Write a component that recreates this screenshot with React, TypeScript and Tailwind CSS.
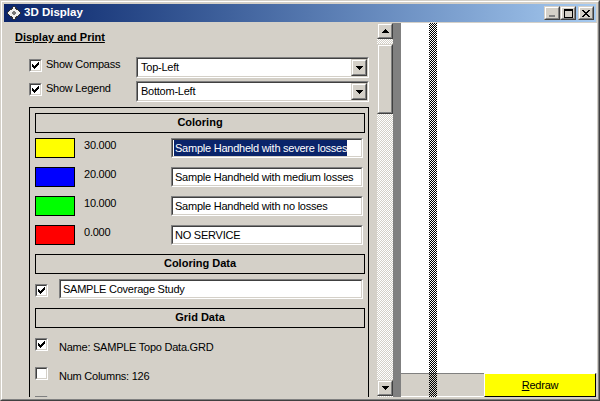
import React from "react";

const FONT = "font-['Liberation_Sans',Arial,sans-serif]";

function Check() {
  return (
    <svg width="9" height="9" viewBox="0 0 9 9" shapeRendering="crispEdges" className="block">
      <path d="M1 3h1v3h-1zM2 4h1v3h-1zM3 5h1v3h-1zM4 4h1v3h-1zM5 3h1v3h-1zM6 2h1v3h-1zM7 1h1v3h-1z" fill="#000" />
    </svg>
  );
}

function CheckBox({ checked }: { checked?: boolean }) {
  return (
    <div className="w-[13px] h-[13px] shrink-0 border border-t-[#808080] border-l-[#808080] border-r-white border-b-white">
      <div className="w-full h-full bg-white border border-t-[#404040] border-l-[#404040] border-r-[#d4d0c8] border-b-[#d4d0c8] flex items-center justify-center">
        {checked && <Check />}
      </div>
    </div>
  );
}

function Sunken({ className, children }: { className: string; children: React.ReactNode }) {
  return (
    <div className={`shrink-0 border border-t-[#808080] border-l-[#808080] border-r-white border-b-white ${className}`}>
      <div className="w-full h-full bg-white border border-t-[#404040] border-l-[#404040] border-r-[#d4d0c8] border-b-[#d4d0c8] flex items-center overflow-hidden whitespace-nowrap">
        {children}
      </div>
    </div>
  );
}

function Raised({ className, children }: { className: string; children?: React.ReactNode }) {
  return (
    <div className={`border border-t-[#d4d0c8] border-l-[#d4d0c8] border-r-[#404040] border-b-[#404040] ${className}`}>
      <div className="w-full h-full bg-[#d4d0c8] border border-t-white border-l-white border-r-[#808080] border-b-[#808080] flex items-center justify-center">
        {children}
      </div>
    </div>
  );
}

function Tri({ up }: { up?: boolean }) {
  return (
    <svg width="7" height="4" viewBox="0 0 7 4" shapeRendering="crispEdges" className="block">
      <path d={up ? "M3 0h1v1h-1zM2 1h3v1h-3zM1 2h5v1h-5zM0 3h7v1h-7z" : "M0 0h7v1h-7zM1 1h5v1h-5zM2 2h3v1h-3zM3 3h1v1h-1z"} fill="#000" />
    </svg>
  );
}

function Combo({ text }: { text: string }) {
  return (
    <Sunken className="w-[233px] h-[21px]">
      <span className="pl-[3px] flex-1">{text}</span>
      <Raised className="w-[16px] h-[17px] shrink-0">
        <Tri />
      </Raised>
    </Sunken>
  );
}

function Header({ text, className = "" }: { text: string; className?: string }) {
  return (
    <div className={`w-[330px] h-[20px] border border-black pb-px flex items-center justify-center font-bold text-[11px] tracking-normal ${className}`}>
      {text}
    </div>
  );
}

function ColorRow({ color, value, text, selected }: { color: string; value: string; text: string; selected?: boolean }) {
  return (
    <div className="flex items-start h-[20px]">
      <div className={`w-[40px] h-[20px] border border-black shrink-0 ${color}`} />
      <div className="w-[96px] pl-[9px] mt-px leading-[13px]">{value}</div>
      <Sunken className="w-[192px] h-[20px]">
        <span className={`ml-px pl-px ${selected ? "bg-[#0a246a] text-white" : ""}`}>{text}</span>
      </Sunken>
    </div>
  );
}

const CHECKER =
  "bg-[image:repeating-conic-gradient(#000_0_25%,transparent_0_50%)] bg-[length:2px_2px]";
const TRACK =
  "bg-[image:repeating-conic-gradient(#d4d0c8_0_25%,#ffffff_0_50%)] bg-[length:2px_2px]";

export default function App() {
  return (
    <div className={`${FONT} w-[600px] h-[401px] overflow-hidden text-[11px] tracking-[-0.24px] text-black bg-[#d4d0c8] border border-t-[#d4d0c8] border-l-[#d4d0c8] border-r-[#404040] border-b-[#404040]`}>
      <div className="w-full h-full flex flex-col p-[2px] border border-t-white border-l-white border-r-[#808080] border-b-[#808080]">
        {/* Title bar */}
        <div className="h-[18px] shrink-0 flex items-center bg-gradient-to-r from-[#0a246a] to-[#a6caf0]">
          <svg width="14" height="14" viewBox="0 0 14 14" className="ml-[3px] block" shapeRendering="crispEdges">
            <path d="M6 0h2v1h1v1h1v1h1v1h1v1h1v1h1v2h-1v1h-1v1h-1v1h-1v1h-1v1h-1v1h-2v-1h-1v-1h-1v-1h-1v-1h-1v-1h-1v-1h-1v-2h1v-1h1v-1h1v-1h1v-1h1v-1h1z" fill="#333" />
            <path d="M6 1h2v2h1v1h2v1h1v1h1v2h-1v1h-1v1h-2v1h-1v2h-2v-2h-1v-1h-2v-1h-1v-1h-1v-2h1v-1h1v-1h2v-1h1z" fill="#f0f0f0" />
            <path d="M6 5h2v1h1v2h-1v1h-2v-1h-1v-2h1z" fill="#777" />
          </svg>
          <span className="ml-[3px] text-white font-bold text-[11.5px] tracking-normal leading-none">3D Display</span>
          <div className="ml-auto flex items-center mr-[2px]">
            <Raised className="w-[16px] h-[14px]">
              <svg width="6" height="2" viewBox="0 0 6 2" className="block mt-[6px] mr-[1px]"><rect width="6" height="2" fill="#808080" /></svg>
            </Raised>
            <Raised className="w-[16px] h-[14px]">
              <svg width="9" height="9" viewBox="0 0 9 9" className="block" shapeRendering="crispEdges"><path d="M0 0h9v2h-9zM0 2h1v7h-1zM8 2h1v7h-1zM1 8h7v1h-7z" fill="#000" /></svg>
            </Raised>
            <Raised className="w-[16px] h-[14px] ml-[2px]">
              <svg width="8" height="7" viewBox="0 0 8 7" className="block" shapeRendering="crispEdges"><path d="M0 0h2v1h-2zM6 0h2v1h-2zM1 1h2v1h-2zM5 1h2v1h-2zM2 2h4v1h-4zM3 3h2v1h-2zM2 4h4v1h-4zM1 5h2v1h-2zM5 5h2v1h-2zM0 6h2v1h-2zM6 6h2v1h-2z" fill="#000" /></svg>
            </Raised>
          </div>
        </div>

        {/* Body */}
        <div className="mt-px flex-1 min-h-0 flex">
          {/* Form */}
          <div className="w-[373px] shrink-0 overflow-hidden pl-[25px] pt-[7px]">
            <div className="-ml-[14px] font-bold tracking-normal leading-[14px] underline">Display and Print</div>

            <div className="mt-[13px] flex items-start h-[21px]">
              <div className="mt-[2px]"><CheckBox checked /></div>
              <div className="w-[94px] pl-[4px] leading-[13px] mt-[1px]">Show Compass</div>
              <Combo text="Top-Left" />
            </div>
            <div className="mt-[3px] flex items-start h-[21px]">
              <div className="mt-[2px]"><CheckBox checked /></div>
              <div className="w-[94px] pl-[4px] leading-[13px] mt-[1px]">Show Legend</div>
              <Combo text="Bottom-Left" />
            </div>

            <div className="mt-[5px] w-[340px] h-[320px] border border-black border-b-0 pl-[5px] pt-[5px]">
              <Header text="Coloring" />
              <div className="mt-[5px] flex flex-col gap-[9px]">
                <ColorRow color="bg-[#ffff00]" value="30.000" text="Sample Handheld with severe losses" selected />
                <ColorRow color="bg-[#0000ff]" value="20.000" text="Sample Handheld with medium losses" />
                <ColorRow color="bg-[#00ff00]" value="10.000" text="Sample Handheld with no losses" />
                <ColorRow color="bg-[#ff0000]" value="0.000" text="NO SERVICE" />
              </div>
              <Header text="Coloring Data" className="mt-[9px]" />
              <div className="mt-[5px] flex items-start h-[20px]">
                <div className="mt-[5px]"><CheckBox checked /></div>
                <div className="w-[11px]" />
                <Sunken className="w-[304px] h-[20px]"><span className="pl-[2px]">SAMPLE Coverage Study</span></Sunken>
              </div>
              <Header text="Grid Data" className="mt-[9px]" />
              <div className="mt-[10px] flex items-start h-[13px]">
                <CheckBox checked />
                <div className="ml-[11px] mt-[3px] leading-[13px]">Name: SAMPLE Topo Data.GRD</div>
              </div>
              <div className="mt-[16px] flex items-start h-[13px]">
                <CheckBox />
                <div className="ml-[11px] mt-[3px] leading-[13px]">Num Columns: 126</div>
              </div>
              <div className="mt-[16px]"><CheckBox /></div>
            </div>
          </div>

          {/* Scrollbar */}
          <div className={`w-[16px] shrink-0 flex flex-col ${TRACK}`}>
            <Raised className="w-[16px] h-[16px] shrink-0"><Tri up /></Raised>
            <Raised className="w-[16px] h-[70px] mt-[5px] shrink-0" />
            <Raised className="w-[16px] h-[16px] shrink-0 mt-auto mb-px"><Tri /></Raised>
          </div>

          {/* Splitter */}
          <div className="w-[8px] shrink-0 bg-[#808080]" />

          {/* Right pane */}
          <div className="relative w-[196px] shrink-0 flex flex-col">
            <div className="flex-1 bg-white" />
            <div className="h-[24px] shrink-0 flex">
              <div className="w-[83px] shrink-0 bg-[#d4d0c8] border-t border-t-[#808080] border-b border-b-white" />
              <div className="w-[112px] h-[24px] shrink-0 bg-[#ffff00] border border-t-white border-l-white border-r-black border-b-black flex items-center justify-center">
                <span className="leading-none"><span className="underline">R</span>edraw</span>
              </div>
            </div>
            <div className={`absolute top-0 bottom-0 left-[28px] w-[8px] ${CHECKER}`} />
          </div>
        </div>
      </div>
    </div>
  );
}
